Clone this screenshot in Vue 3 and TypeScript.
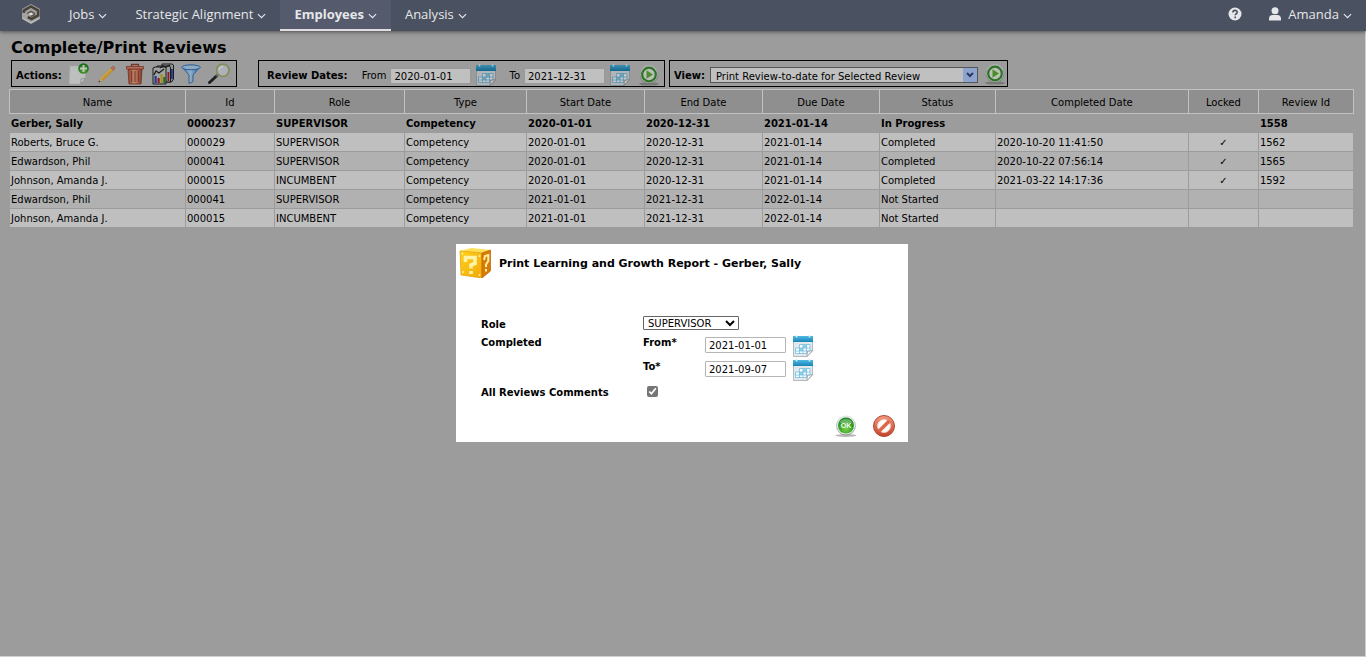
<script setup lang="ts">
import { ref } from 'vue'

interface Review {
  name: string
  id: string
  role: string
  start: string
  end: string
  due: string
  status: string
  completed: string
  locked: boolean
  reviewId: string
}

const menus = [
  { label: 'Jobs', active: false },
  { label: 'Strategic Alignment', active: false },
  { label: 'Employees', active: true },
  { label: 'Analysis', active: false },
]

const actions = [
  { icon: 'add', label: 'Add review' },
  { icon: 'edit', label: 'Edit review' },
  { icon: 'trash', label: 'Delete review' },
  { icon: 'report', label: 'Reports' },
  { icon: 'filter', label: 'Filter' },
  { icon: 'search', label: 'Search' },
]

const columns = [
  { label: 'Name', width: 176 },
  { label: 'Id', width: 89 },
  { label: 'Role', width: 130 },
  { label: 'Type', width: 122 },
  { label: 'Start Date', width: 118 },
  { label: 'End Date', width: 118 },
  { label: 'Due Date', width: 117 },
  { label: 'Status', width: 116 },
  { label: 'Completed Date', width: 193 },
  { label: 'Locked', width: 70 },
  { label: 'Review Id', width: 95 },
]
const totalWidth = columns.reduce((sum, c) => sum + c.width, 0)

const reviews: Review[] = [
  { name: 'Gerber, Sally', id: '0000237', role: 'SUPERVISOR', start: '2020-01-01', end: '2020-12-31', due: '2021-01-14', status: 'In Progress', completed: '', locked: false, reviewId: '1558' },
  { name: 'Roberts, Bruce G.', id: '000029', role: 'SUPERVISOR', start: '2020-01-01', end: '2020-12-31', due: '2021-01-14', status: 'Completed', completed: '2020-10-20 11:41:50', locked: true, reviewId: '1562' },
  { name: 'Edwardson, Phil', id: '000041', role: 'SUPERVISOR', start: '2020-01-01', end: '2020-12-31', due: '2021-01-14', status: 'Completed', completed: '2020-10-22 07:56:14', locked: true, reviewId: '1565' },
  { name: 'Johnson, Amanda J.', id: '000015', role: 'INCUMBENT', start: '2020-01-01', end: '2020-12-31', due: '2021-01-14', status: 'Completed', completed: '2021-03-22 14:17:36', locked: true, reviewId: '1592' },
  { name: 'Edwardson, Phil', id: '000041', role: 'SUPERVISOR', start: '2021-01-01', end: '2021-12-31', due: '2022-01-14', status: 'Not Started', completed: '', locked: false, reviewId: '' },
  { name: 'Johnson, Amanda J.', id: '000015', role: 'INCUMBENT', start: '2021-01-01', end: '2021-12-31', due: '2022-01-14', status: 'Not Started', completed: '', locked: false, reviewId: '' },
]

const selected = ref(0)
const rangeFrom = ref('2020-01-01')
const rangeTo = ref('2021-12-31')
const reportFrom = ref('2021-01-01')
const reportTo = ref('2021-09-07')
const allComments = ref(true)
const dialogOpen = ref(true)
</script>

<template>
  <svg class="defs" aria-hidden="true">
    <defs>
      <linearGradient id="g-cal" x1="0" y1="0" x2="0" y2="1"><stop offset="0" stop-color="#4fb9e2" /><stop offset="1" stop-color="#1784b8" /></linearGradient>
      <radialGradient id="g-green" cx=".5" cy=".7" r=".65"><stop offset="0" stop-color="#7ad344" /><stop offset="1" stop-color="#17831c" /></radialGradient>
      <linearGradient id="g-ring" x1="0" y1="0" x2="0" y2="1"><stop offset="0" stop-color="#dfe3e0" /><stop offset="1" stop-color="#8d958f" /></linearGradient>
      <linearGradient id="g-red" x1="0" y1="0" x2="0" y2="1"><stop offset="0" stop-color="#f39a80" /><stop offset="1" stop-color="#c2432a" /></linearGradient>
      <linearGradient id="g-bin" x1="0" y1="0" x2="1" y2="0"><stop offset="0" stop-color="#b85a40" /><stop offset=".45" stop-color="#f7a88c" /><stop offset="1" stop-color="#a84c34" /></linearGradient>
      <linearGradient id="g-funnel" x1="0" y1="0" x2="1" y2="0"><stop offset="0" stop-color="#3f8fe0" /><stop offset=".45" stop-color="#bfe2ff" /><stop offset="1" stop-color="#2f79cf" /></linearGradient>
      <linearGradient id="g-gold" x1="0" y1="0" x2="1" y2="1"><stop offset="0" stop-color="#ffd21c" /><stop offset="1" stop-color="#f2a80a" /></linearGradient>
    </defs>
    <symbol id="i-calendar" viewBox="0 0 22 22">
      <path d="M1.500 6h19v10L15 21.500H1.500z" fill="#e3e8eb" stroke="#a3acb2" stroke-width=".8" />
      <path d="M1 1h20v6H1z" fill="url(#g-cal)" />
      <path d="M4.500 0v2.500M17.500 0v2.500" stroke="#d8eef8" stroke-width="1.600" />
      <path d="M7.500 9.500H18V16h-3.500v2.500h-11V13h4z" fill="#fff" stroke="#6fbde2" stroke-width=".8" />
      <path d="M11 9.500h3.500V13H11zM7.500 13H11v3H7.500z" fill="#8fd0ef" />
      <path d="M7.500 13H18M3.500 16h11M7.500 13v5.500M11 9.500v9M14.500 9.500V16" stroke="#6fbde2" stroke-width=".8" fill="none" />
      <path d="M20.500 15.500L15 21.500l.5-5z" fill="#fbfcfc" stroke="#8c9398" stroke-width=".7" />
    </symbol>
    <symbol id="i-run" viewBox="0 0 22 22">
      <ellipse cx="11" cy="20" rx="10" ry="1.600" fill="#777" opacity=".55" />
      <circle cx="11" cy="10.500" r="9" fill="#e9eee8" stroke="url(#g-ring)" />
      <circle cx="11" cy="10.500" r="6.800" fill="#eef7ea" stroke="#3a9432" stroke-width="2.200" />
      <path d="M8.500 6.200l6.500 4.300-6.500 4.300z" fill="#62b43a" />
    </symbol>
    <symbol id="i-add" viewBox="0 0 22 22">
      <path d="M2 3h15.500v13L13 21H1z" fill="#f2f4f3" stroke="#d4d8d9" stroke-width=".7" />
      <path d="M17.500 15.500L13 21v-5z" fill="#fff" stroke="#8d9192" stroke-width=".6" />
      <circle cx="15.500" cy="5.500" r="5.300" fill="url(#g-green)" />
      <path d="M15.500 2v7M12 5.500h7" stroke="#f4fff0" stroke-width="2" />
    </symbol>
    <symbol id="i-edit" viewBox="0 0 22 22">
      <path d="M3 19l1.400-4L15 5l2.300 2.300L7 17.400z" fill="#ffc03f" stroke="#e0a030" stroke-width=".6" />
      <path d="M5 15L15.500 5.400" stroke="#ffe58a" stroke-width="1" />
      <path d="M15 5l1.500-1.500c1-.9 3.300 1.300 2.400 2.300L17.300 7.300z" fill="#f08c7c" stroke="#bc5e50" stroke-width=".5" />
      <path d="M2.500 19.500l1.800-4.500L7 17.500z" fill="#f3cfa0" /><path d="M2.500 19.500l.7-1.900 1.200 1.200z" fill="#333" />
    </symbol>
    <symbol id="i-trash" viewBox="0 0 22 22">
      <path d="M4 6h14l-1 15H5z" fill="url(#g-bin)" stroke="#8d3d2a" stroke-width=".8" />
      <path d="M7.500 8v11M11 8v11M14.500 8v11" stroke="#a04c36" stroke-width="1.100" />
      <path d="M2.500 3.500h17V6h-17z" fill="#e88f74" stroke="#96432f" stroke-width=".8" />
      <path d="M7.500 3.500v-2h7v2" fill="none" stroke="#96432f" stroke-width="1.300" />
    </symbol>
    <symbol id="i-report" viewBox="0 0 22 22">
      <path d="M10 1h10l1.500 1v14l-2 3h-9z" fill="#b9bcbd" stroke="#222" />
      <path d="M5 3h12l1.500 1v15H6z" fill="#c9cbcb" stroke="#222" />
      <path d="M1 5l2-1h11v17H1z" fill="#cfd2d3" stroke="#222" />
      <path d="M2 12l2-4 3 2 5-4M8 5l3-2 3 1 4-2" fill="none" stroke="#222" stroke-width="1.300" />
      <path d="M2.500 20v-7h2.200v7z" fill="#2c49b8" /><path d="M5.500 20v-5h2.200v5z" fill="#b92225" /><path d="M8.500 20v-9h2.200v9z" fill="#d5bc1c" /><path d="M11.300 20v-6h2v6z" fill="#278b35" />
      <path d="M15.500 18V9h1.800v9z" fill="#b92225" /><path d="M19 16V6h1.800v10z" fill="#2c49b8" />
    </symbol>
    <symbol id="i-filter" viewBox="0 0 22 22">
      <path d="M2 4l7 8v8.500l4-2V12l7-8z" fill="url(#g-funnel)" stroke="#2668b3" stroke-width=".8" />
      <ellipse cx="11" cy="4.300" rx="9.300" ry="2.400" fill="#b9dcf8" stroke="#2d75c7" />
    </symbol>
    <symbol id="i-search" viewBox="0 0 22 22">
      <path d="M1.500 19.500l7-6.500" stroke="#292c2b" stroke-width="3" stroke-linecap="round" />
      <path d="M8 13.500l2-1.900" stroke="#777" stroke-width="2" />
      <circle cx="14.800" cy="7.300" r="6.200" fill="#dfe4ec" stroke="#a7b672" stroke-width="1.700" />
      <path d="M11 7c.3-2.200 2-3.300 4-3.300" stroke="#fff" stroke-width="1.500" fill="none" />
    </symbol>
    <symbol id="i-ok" viewBox="0 0 22 22">
      <ellipse cx="11" cy="20.500" rx="10.500" ry="1.400" fill="#888" opacity=".6" />
      <circle cx="11" cy="10.500" r="9.500" fill="#eceeec" stroke="url(#g-ring)" />
      <circle cx="11" cy="10.500" r="8" fill="url(#g-green)" />
      <path d="M4.500 7.500c2-5 11-5 13 0-4 1.500-9 1.500-13 0z" fill="#fff" opacity=".28" />
    </symbol>
    <symbol id="i-cancel" viewBox="0 0 22 22">
      <circle cx="11" cy="11" r="10.500" fill="url(#g-red)" stroke="#b34530" />
      <circle cx="11" cy="11" r="6.400" fill="#fff" stroke="#f7d6cc" />
      <path d="M6 16.300L16.300 6" stroke="#dd674b" stroke-width="3.600" />
    </symbol>
    <symbol id="i-question" viewBox="0 0 32 30">
      <path d="M1 3l11-3 20 2-9 4z" fill="#ffdf55" />
      <path d="M1 3l22 2V30L2 27z" fill="url(#g-gold)" stroke="#e5a412" stroke-width=".8" />
      <path d="M23 5L31.500 2v21L23 30z" fill="#d97c06" stroke="#b86404" stroke-width=".7" />
      <path d="M6.500 14V9.500h9.500v6l-4 1.500v3.500M12 23v3" fill="none" stroke="#fff3a6" stroke-width="3.600" />
      <path d="M25 12l1-4 3.300-1v6L27 16.500V19M27 21v2.500" fill="none" stroke="#fff0a0" stroke-width="2" />
      <g fill="#fff2a0"><circle cx="3.500" cy="5.500" r="1" /><circle cx="20.500" cy="8" r="1" /><circle cx="4" cy="24" r="1" /><circle cx="20.500" cy="27" r="1" /></g>
    </symbol>
    <symbol id="i-chevron" viewBox="0 0 10 6">
      <path d="M1 1l4 3.800L9 1" fill="none" stroke="currentColor" stroke-width="1.300" />
    </symbol>
  </svg>

  <div class="page">
    <nav class="nav">
      <svg class="logo" viewBox="0 0 18 20">
        <path d="M9 0l9 5v10l-9 5-9-5V5z" fill="#a3a3a2" />
        <path d="M1.800 9V6.500L9 2.400l7.200 4.100v5L9.500 15l-3.700-2" fill="none" stroke="#48423b" stroke-width="2.600" />
        <path d="M5 9.500L9 7.300l3.500 2v1.500L9 12.500" fill="none" stroke="#5a544c" stroke-width="1.400" />
        <path d="M9 8.700l2 1.200-2 1.100-2-1.100z" fill="#f1f1f1" />
        <path d="M1 14.300L9 19l8-4.700" fill="none" stroke="#c4c4c4" />
      </svg>
      <button v-for="m in menus" :key="m.label" type="button" class="menu" :class="{ active: m.active }">
        {{ m.label }}<svg class="chev"><use href="#i-chevron" /></svg>
      </button>
      <button type="button" class="help" aria-label="Help">
        <svg viewBox="0 0 14 14"><circle cx="7" cy="7" r="6.500" fill="#e6e7ea" /><path d="M4.900 5.500c0-2.800 4.300-2.700 4.300-.3 0 1.600-2 1.600-2 3.100M7.200 9.600v1.700" fill="none" stroke="#4a5160" stroke-width="1.600" /></svg>
      </button>
      <button type="button" class="menu user">
        <svg class="person" viewBox="0 0 12 14"><circle cx="6" cy="3.800" r="3.500" fill="#e6e7ea" /><path d="M0 13.500v-2C0 9 2 8 3.500 8h5C10 8 12 9 12 11.500v2z" fill="#e6e7ea" /></svg>
        Amanda<svg class="chev"><use href="#i-chevron" /></svg>
      </button>
    </nav>

    <main class="main">
      <h1>Complete/Print Reviews</h1>

      <div class="toolbar">
        <div class="box actions">
          <b>Actions:</b>
          <button v-for="a in actions" :key="a.icon" type="button" class="icon" :aria-label="a.label">
            <svg><use :href="'#i-' + a.icon" /></svg>
          </button>
        </div>
        <div class="box dates">
          <b>Review Dates:</b>
          <label for="range-from">From</label>
          <input id="range-from" v-model="rangeFrom" type="text" class="date" />
          <button type="button" class="icon" aria-label="Pick start date"><svg><use href="#i-calendar" /></svg></button>
          <label for="range-to">To</label>
          <input id="range-to" v-model="rangeTo" type="text" class="date" />
          <button type="button" class="icon" aria-label="Pick end date"><svg><use href="#i-calendar" /></svg></button>
          <button type="button" class="icon run" aria-label="Apply dates"><svg><use href="#i-run" /></svg></button>
        </div>
        <div class="box view">
          <label for="view"><b>View:</b></label>
          <span class="view-field">
            <select id="view"><option>Print Review-to-date for Selected Review</option></select>
            <span class="arrow"><svg viewBox="0 0 8 6"><path d="M1 1l3 3 3-3" fill="none" stroke="currentColor" stroke-width="2" /></svg></span>
          </span>
          <button type="button" class="icon" aria-label="Run view"><svg><use href="#i-run" /></svg></button>
        </div>
      </div>

      <table>
        <colgroup>
          <col v-for="c in columns" :key="c.label" :style="{ width: (c.width / totalWidth) * 100 + '%' }" />
        </colgroup>
        <thead>
          <tr><th v-for="c in columns" :key="c.label" scope="col">{{ c.label }}</th></tr>
        </thead>
        <tbody>
          <tr v-for="(r, i) in reviews" :key="i" :class="{ selected: i === selected }" @click="selected = i">
            <td>{{ r.name }}</td>
            <td>{{ r.id }}</td>
            <td>{{ r.role }}</td>
            <td>Competency</td>
            <td>{{ r.start }}</td>
            <td>{{ r.end }}</td>
            <td>{{ r.due }}</td>
            <td>{{ r.status }}</td>
            <td>{{ r.completed }}</td>
            <td class="locked">{{ r.locked ? '✓' : '' }}</td>
            <td>{{ r.reviewId }}</td>
          </tr>
        </tbody>
      </table>
    </main>

    <div v-if="dialogOpen" class="overlay">
      <form class="dialog" role="dialog" aria-labelledby="dialog-title" @submit.prevent="dialogOpen = false">
        <header>
          <svg class="question"><use href="#i-question" /></svg>
          <h2 id="dialog-title">Print Learning and Growth Report - Gerber, Sally</h2>
        </header>
        <div class="fields">
          <label for="role">Role</label>
          <select id="role" class="role"><option>SUPERVISOR</option></select>
          <span>Completed</span>
          <label for="report-from">From*</label>
          <input id="report-from" v-model="reportFrom" type="text" class="date" />
          <button type="button" class="icon" aria-label="Pick from date"><svg><use href="#i-calendar" /></svg></button>
          <label class="to-label" for="report-to">To*</label>
          <input id="report-to" v-model="reportTo" type="text" class="date" />
          <button type="button" class="icon" aria-label="Pick to date"><svg><use href="#i-calendar" /></svg></button>
          <label class="comments-label" for="comments">All Reviews Comments</label>
          <input id="comments" v-model="allComments" type="checkbox" />
        </div>
        <footer>
          <button type="submit" class="icon">
            <svg viewBox="0 0 22 22">
              <use href="#i-ok" width="22" height="22" />
              <text class="ok" x="11" y="13" text-anchor="middle">OK</text>
            </svg>
          </button>
          <button type="button" class="icon" aria-label="Cancel" @click="dialogOpen = false"><svg><use href="#i-cancel" /></svg></button>
        </footer>
      </form>
    </div>
  </div>
</template>

<style>
html, body { background: #cfcfcf; }
</style>

<style scoped>
* { box-sizing: border-box; }
.defs { position: absolute; width: 0; height: 0; }
button, input, select { font: inherit; color: inherit; }
button { border: 0; padding: 0; background: none; }
svg { display: block; }
.page {
  position: relative;
  min-height: calc(100vh - 1px);
  margin: 0 1px 1px 0;
  background: #9c9c9c;
  color: #000;
  font: 10px/14px Verdana, "DejaVu Sans", sans-serif;
}
.nav {
  display: flex;
  height: 31px;
  margin-right: -1px;
  padding: 0 14px 0 22px;
  align-items: center;
  background: #4a5160;
  color: #e6e7ea;
  font: 13px/18px "Open Sans", sans-serif;
  box-shadow: 0 1px 4px rgba(0, 0, 0, .5);
}
.logo { width: 18px; height: 20px; margin: 0 15px 3px 0; }
.menu {
  display: flex;
  height: 31px;
  padding: 0 14px 2px;
  align-items: center;
  border-bottom: 2px solid transparent;
}
.menu.active { background: #555b6d; border-color: #e0dce2; font-weight: 700; }
.chev { width: 9px; height: 6px; margin: 4px 0 0 4px; }
.help { margin-left: auto; }
.help svg { width: 14px; height: 14px; margin-bottom: 3px; }
.user { padding: 0 0 2px 27px; }
.person { width: 12px; height: 14px; margin-right: 7px; }

.main { padding: 7px 11px 0 9px; }
h1 { margin: 0 0 2px 2px; font-size: 16px; line-height: 20px; font-weight: 700; }
.toolbar { display: flex; height: 27px; margin: 0 0 2px 2px; }
.toolbar .icon { filter: brightness(.78); }
.box { display: flex; align-items: center; border: 1px solid #000; height: 27px; padding-top: 2px; }
.box > b, .box > label { padding-top: 3px; }
.icon svg { width: 22px; height: 22px; }
.actions { gap: 6px; padding: 0 6px 0 4px; width: 226px; margin-right: 21px; }
.actions b { margin-right: auto; padding-top: 4px; }
.dates { width: 407px; padding: 2px 4px 0 8px; margin-right: 4px; }
.dates b { margin-right: auto; }
.dates .icon { margin-left: 4px; }
.dates .icon + label { margin-left: 12px; }
.dates .icon.run { margin-left: 7px; }
.date {
  width: 81px;
  height: 16px;
  padding: 1px 3px 0;
  border: 1px solid #999;
  border-radius: 1px;
  background: #c0c0c0;
}
.dates .date { margin-left: 4px; margin-top: 2px; }
.view { width: 339px; padding: 0 1px 0 4px; }
.view > label { padding-top: 4px; }
.view-field { position: relative; flex: 1; margin: 3px 6px 0 5px; }
.view-field select {
  display: block;
  appearance: none;
  width: 100%;
  height: 16px;
  padding: 2px 20px 0 5px;
  border: 1px solid #555;
  border-radius: 0;
  background: #c0c0c0;
  line-height: 13px;
}
.arrow {
  position: absolute;
  top: 1px;
  right: 1px;
  width: 14px;
  height: 14px;
  padding: 4px 3px;
  background: #8fa3cf;
  color: #2a3a5e;
  pointer-events: none;
}
.arrow svg { width: 8px; height: 6px; }

table { width: 100%; table-layout: fixed; border-collapse: collapse; }
th {
  height: 24px;
  padding: 2px 0 0;
  border: 1px solid #c2c2c2;
  background: #8f8f8f;
  font-weight: 400;
}
td {
  height: 19px;
  padding: 1px 1px 0;
  border: 1px solid #9c9c9c;
  line-height: 14px;
  white-space: nowrap;
}
tbody tr:nth-child(odd) td { background: #b1b1b1; }
tbody tr:nth-child(even) td { background: #bfbfbf; }
tbody tr.selected td { background: #9c9c9c; font-weight: 700; }
.locked { text-align: center; }

.overlay {
  position: absolute;
  inset: 31px 0 0;
  display: flex;
  padding: 0 1px 2px 0;
  align-items: center;
  justify-content: center;
}
.dialog {
  width: 452px;
  padding: 4px 13px 5px 3px;
  background: #fff;
  font-weight: 700;
}
header { display: flex; align-items: center; gap: 8px; }
.question { width: 32px; height: 30px; }
h2 { margin: 0; padding-top: 3px; font-size: 11px; line-height: 14px; }
.fields {
  display: grid;
  grid-template-columns: 162px 62px 87px auto;
  grid-template-rows: 18px 24px 24px 24px;
  justify-content: start;
  margin: 37px 0 0 22px;
}
.fields > span, .fields > label { padding-top: 3px; }
.to-label { grid-column: 2; }
.fields > .comments-label { padding-top: 5px; }
.fields .date { background: #fff; border-color: #b5b5b5; margin-top: 4px; font-weight: 400; }
.fields .icon { padding-top: 2px; justify-self: start; }
.role {
  grid-column: span 3;
  justify-self: start;
  width: 96px;
  height: 14px;
  margin-top: 1px;
  padding: 0;
  border: 1px solid #666;
  border-radius: 1px;
  background: #fff;
  font-weight: 400;
}
input[type="checkbox"] { width: 11px; height: 11px; margin: 5px 4px 0; accent-color: #767676; }
footer { display: flex; justify-content: flex-end; gap: 16px; margin-top: 10px; }
.ok { font: 700 7px "Liberation Sans", sans-serif; fill: #f4fff0; }
</style>
